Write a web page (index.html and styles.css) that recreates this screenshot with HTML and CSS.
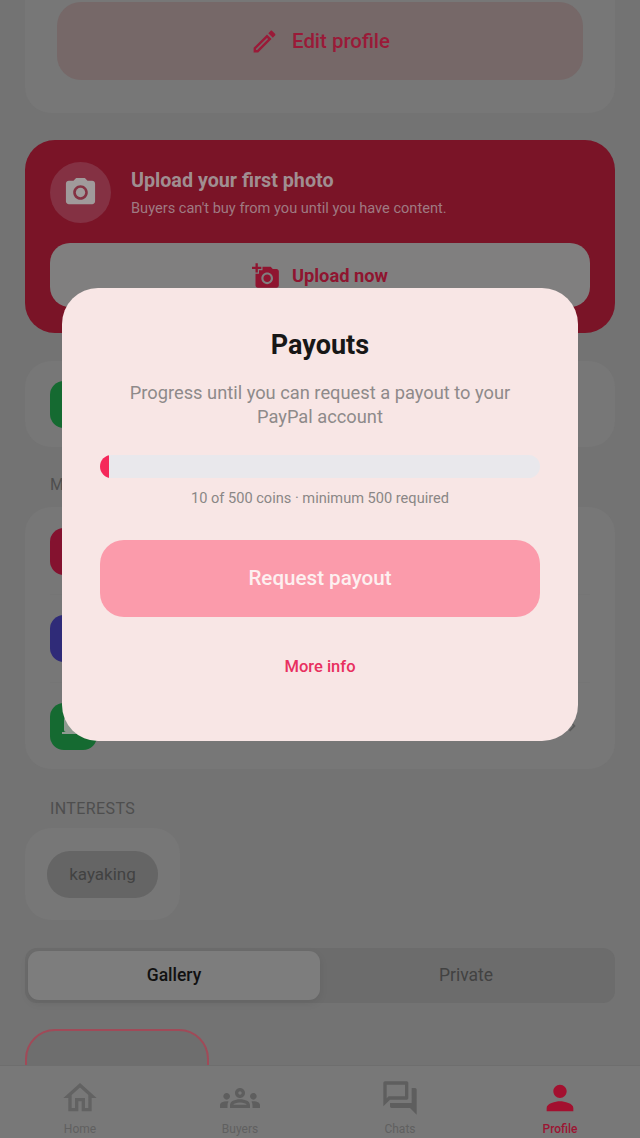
FILE: index.html
```html
<!DOCTYPE html>
<html lang="en">

<head>
    <meta charset="UTF-8">
    <meta name="viewport" content="width=device-width, initial-scale=1.0">
    <title>Profile</title>
    <link rel="stylesheet" href="styles.css">
</head>

<body>
    <div class="page">
        <div class="card profile-card">
            <button class="edit-btn">
                <svg class="edit-icon" viewBox="0 0 24 24"><path d="M3 17.25V21h3.75L17.81 9.94l-3.75-3.75L3 17.25zM5.92 19H5v-.92l9.06-9.06.92.92L5.92 19zM20.71 7.04c.39-.39.39-1.02 0-1.41l-2.34-2.34c-.39-.39-1.02-.39-1.41 0l-1.83 1.83 3.75 3.75 1.83-1.83z"/></svg>
                <span>Edit profile</span>
            </button>
        </div>

        <div class="banner">
            <div class="banner-head">
                <div class="banner-circle">
                    <svg class="camera-icon" viewBox="0 0 24 24"><path d="M9 2L7.17 4H4c-1.1 0-2 .9-2 2v12c0 1.1.9 2 2 2h16c1.1 0 2-.9 2-2V6c0-1.1-.9-2-2-2h-3.17L15 2H9zm3 15c-2.76 0-5-2.24-5-5s2.24-5 5-5 5 2.24 5 5-2.24 5-5 5z"/><circle cx="12" cy="12" r="3.2"/></svg>
                </div>
                <div>
                    <div class="banner-title">Upload your first photo</div>
                    <div class="banner-sub">Buyers can't buy from you until you have content.</div>
                </div>
            </div>
            <button class="upload-btn">
                <svg class="upload-icon" viewBox="0 0 24 24"><path d="M3 4V1h2v3h3v2H5v3H3V6H0V4h3zm3 6V7h3V4h7l1.83 2H21c1.1 0 2 .9 2 2v12c0 1.1-.9 2-2 2H5c-1.1 0-2-.9-2-2V10h3zm7 9c2.76 0 5-2.24 5-5s-2.24-5-5-5-5 2.24-5 5 2.24 5 5 5zm-3.2-5c0 1.77 1.43 3.2 3.2 3.2s3.2-1.43 3.2-3.2-1.43-3.2-3.2-3.2-3.2 1.43-3.2 3.2z"/></svg>
                <span>Upload now</span>
            </button>
        </div>

        <div class="card single-row">
            <div class="row-icon green"></div>
        </div>

        <div class="section-label label-first">MY ACCOUNT</div>
        <div class="card rows">
            <div class="row">
                <div class="row-icon red"></div>
            </div>
            <div class="row">
                <div class="row-icon blue">
                    <svg class="row-glyph" viewBox="0 0 24 24"><circle cx="12" cy="12" r="9"/></svg>
                </div>
            </div>
            <div class="row">
                <div class="row-icon green">
                    <svg class="row-glyph" viewBox="0 0 24 24"><path d="M20 18c1.1 0 2-.9 2-2V6c0-1.1-.9-2-2-2H4c-1.1 0-2 .9-2 2v10c0 1.1.9 2 2 2H0v2h24v-2h-4z"/></svg>
                </div>
                <svg class="chevron" viewBox="0 0 24 24"><path d="M8.6 16.6L13.2 12 8.6 7.4 10 6l6 6-6 6z"/></svg>
            </div>
        </div>

        <div class="section-label">INTERESTS</div>
        <div class="card interests">
            <span class="chip">kayaking</span>
        </div>

        <div class="tabs">
            <div class="tab active">Gallery</div>
            <div class="tab">Private</div>
        </div>

        <div class="tile"></div>

        <nav class="bottom-nav">
            <div class="nav-item">
                <svg class="nav-icon home" viewBox="0 0 24 24"><path d="M12 5.69l5 4.5V18h-2v-6H9v6H7v-7.81l5-4.5M12 3L2 12h3v8h6v-6h2v6h6v-8h3L12 3z"/></svg>
                <span>Home</span>
            </div>
            <div class="nav-item">
                <svg class="nav-icon" viewBox="0 0 24 24"><path d="M4 13c1.1 0 2-.9 2-2s-.9-2-2-2-2 .9-2 2 .9 2 2 2zm1.13 1.1C4.76 14.04 4.39 14 4 14c-.99 0-1.93.21-2.78.58C.48 14.9 0 15.62 0 16.43V18h4.5v-1.61c0-.83.23-1.61.63-2.29zM20 13c1.1 0 2-.9 2-2s-.9-2-2-2-2 .9-2 2 .9 2 2 2zm4 3.43c0-.81-.48-1.53-1.22-1.85C21.93 14.21 20.99 14 20 14c-.39 0-.76.04-1.13.1.4.68.63 1.46.63 2.29V18H24v-1.57zm-7.76-2.78C15.07 13.13 13.63 12.75 12 12.75c-1.63 0-3.07.39-4.24.9C6.68 14.13 6 15.21 6 16.39V18h12v-1.61c0-1.18-.68-2.26-1.76-2.74zM8.07 16c.09-.23.13-.39.91-.69.97-.38 1.99-.56 3.02-.56s2.05.18 3.02.56c.77.3.81.46.91.69H8.07zM12 8c.55 0 1 .45 1 1s-.45 1-1 1-1-.45-1-1 .45-1 1-1m0-2c-1.66 0-3 1.34-3 3s1.34 3 3 3 3-1.34 3-3-1.34-3-3-3z"/></svg>
                <span>Buyers</span>
            </div>
            <div class="nav-item">
                <svg class="nav-icon" viewBox="0 0 24 24"><path d="M15 4v7H5.17L4 12.17V4h11m1-2H3c-.55 0-1 .45-1 1v14l4-4h10c.55 0 1-.45 1-1V3c0-.55-.45-1-1-1zm5 4h-2v9H6v2c0 .55.45 1 1 1h11l4 4V7c0-.55-.45-1-1-1z"/></svg>
                <span>Chats</span>
            </div>
            <div class="nav-item current">
                <svg class="nav-icon" viewBox="0 0 24 24"><path d="M12 12c2.21 0 4-1.79 4-4s-1.79-4-4-4-4 1.79-4 4 1.79 4 4 4zm0 2c-2.67 0-8 1.34-8 4v2h16v-2c0-2.66-5.33-4-8-4z"/></svg>
                <span>Profile</span>
            </div>
        </nav>

        <div class="modal">
            <h2 class="modal-title">Payouts</h2>
            <p class="modal-desc">Progress until you can request a payout to your PayPal account</p>
            <div class="progress">
                <div class="progress-fill" style="width: 2%"></div>
            </div>
            <p class="progress-note">10 of 500 coins · minimum 500 required</p>
            <button class="payout-btn">Request payout</button>
            <div class="more-info">More info</div>
        </div>
    </div>
</body>

</html>
```

FILE: styles.css
```css
* {
    box-sizing: border-box;
}

body {
    margin: 0;
    font-family: Roboto, "Liberation Sans", sans-serif;
    background: #737373;
}

button {
    font-family: inherit;
    border: none;
}

.page {
    position: relative;
    height: 1138px;
    padding: 0 25px;
    overflow: hidden;
    background: #737373;
}

.card {
    background: #777;
    border-radius: 26px;
}

.profile-card {
    margin-top: -100px;
    padding: 102px 32px 33px;
}

.edit-btn {
    display: flex;
    align-items: center;
    justify-content: center;
    gap: 13px;
    width: 100%;
    height: 78px;
    border-radius: 24px;
    background: #766868;
    color: #9a1a38;
    font-size: 20.4px;
    font-weight: 500;
}

.edit-icon {
    width: 29px;
    height: 29px;
    fill: #9a1a38;
}

.banner {
    margin-top: 27px;
    padding: 22px 25px 26px;
    border-radius: 30px;
    background: #7a1427;
}

.banner-head {
    display: flex;
    align-items: center;
    gap: 20px;
}

.banner-circle {
    display: flex;
    align-items: center;
    justify-content: center;
    width: 61px;
    height: 61px;
    border-radius: 50%;
    background: #843143;
}

.camera-icon {
    width: 35px;
    height: 35px;
    fill: #a09a9b;
}

.banner-title {
    color: #a08e91;
    font-size: 19.7px;
    font-weight: 700;
    line-height: 24px;
}

.banner-sub {
    margin-top: 6px;
    color: #9f7a82;
    font-size: 14.6px;
    line-height: 18px;
}

.upload-btn {
    display: flex;
    align-items: center;
    justify-content: center;
    gap: 12px;
    width: 100%;
    height: 64px;
    margin-top: 20px;
    padding-top: 2px;
    border-radius: 20px;
    background: #807f7f;
    color: #8f1530;
    font-size: 18.3px;
    font-weight: 700;
}

.upload-icon {
    width: 28px;
    height: 28px;
    fill: #8f1530;
}

.single-row {
    margin-top: 28px;
    padding: 20px 25px 19px;
}

.row-icon {
    display: flex;
    align-items: center;
    justify-content: center;
    width: 47px;
    height: 47px;
    border-radius: 14px;
}

.green {
    background: #156a31;
}

.red {
    background: #84122f;
}

.blue {
    background: #2f2b78;
}

.row-glyph {
    width: 24px;
    height: 24px;
    fill: #8e9a90;
}

.section-label {
    margin-top: 30px;
    padding-left: 25px;
    color: #4e4e4e;
    font-size: 16px;
    line-height: 20px;
    letter-spacing: 0.4px;
}

.label-first {
    margin-top: 28px;
}

.rows {
    height: 262px;
    margin-top: 12px;
    padding: 1px 25px 0;
}

.section-label + .interests {
    margin-top: 9px;
}

.row {
    display: flex;
    align-items: center;
    justify-content: space-between;
    height: 87.33px;
    border-bottom: 1px solid #757575;
}

.row:last-child {
    border-bottom: none;
}

.chevron {
    width: 22px;
    height: 22px;
    margin-right: 7px;
    fill: #5c5c5c;
}

.interests {
    width: 155px;
    padding: 23px 22px 22px;
}

.chip {
    display: block;
    height: 47px;
    border-radius: 23px;
    background: #656565;
    color: #424242;
    font-size: 17px;
    line-height: 47px;
    text-align: center;
}

.tabs {
    display: flex;
    height: 55px;
    margin-top: 28px;
    padding: 3px;
    border-radius: 12px;
    background: #6c6c6c;
}

.tab {
    flex: 1;
    border-radius: 11px;
    color: #424242;
    font-size: 17.5px;
    line-height: 49px;
    text-align: center;
}

.tab.active {
    background: #7d7d7d;
    color: #111;
    font-weight: 500;
    box-shadow: 0 3px 8px rgba(0, 0, 0, 0.08);
}

.tile {
    width: 184px;
    height: 90px;
    margin-top: 26px;
    border: 2px solid #a04a58;
    border-radius: 30px;
    background: #6e6e6e;
}

.bottom-nav {
    position: absolute;
    left: 0;
    right: 0;
    bottom: 0;
    display: flex;
    height: 73px;
    border-top: 1px solid #6e6e6e;
    background: #787878;
}

.nav-item {
    flex: 1;
    display: flex;
    flex-direction: column;
    align-items: center;
    padding-top: 12px;
    color: #606060;
    font-size: 12px;
    line-height: 14px;
}

.nav-icon {
    width: 40px;
    height: 40px;
    margin-bottom: 4px;
    fill: #5e5e5e;
}

.nav-icon.home {
    fill: #626262;
}

.nav-item.current {
    color: #9c1533;
    font-weight: 500;
}

.nav-item.current .nav-icon {
    fill: #a3102f;
}

.modal {
    position: absolute;
    top: 288px;
    left: 62px;
    width: 516px;
    height: 453px;
    padding: 42px 38px 0;
    border-radius: 36px;
    background: #f8e6e5;
    text-align: center;
}

.modal-title {
    margin: 0;
    color: #171717;
    font-size: 27px;
    font-weight: 700;
    line-height: 30px;
}

.modal-desc {
    margin: 21px 0 0;
    padding: 0 24px;
    color: #8e8a8a;
    font-size: 18.3px;
    line-height: 24px;
}

.progress {
    height: 23px;
    margin-top: 26px;
    border-radius: 12px;
    background: #e9e8ec;
    overflow: hidden;
}

.progress-fill {
    height: 100%;
    background: #f5285a;
}

.progress-note {
    margin: 10px 0 0;
    color: #8a8686;
    font-size: 14.6px;
    line-height: 20px;
}

.payout-btn {
    width: 100%;
    height: 77px;
    margin-top: 32px;
    padding-bottom: 3px;
    border-radius: 24px;
    background: #fb9bab;
    color: #fdf0f0;
    font-size: 20.6px;
    font-weight: 500;
}

.more-info {
    margin-top: 40px;
    color: #e8305f;
    font-size: 16.5px;
    font-weight: 500;
    line-height: 20px;
}
```
